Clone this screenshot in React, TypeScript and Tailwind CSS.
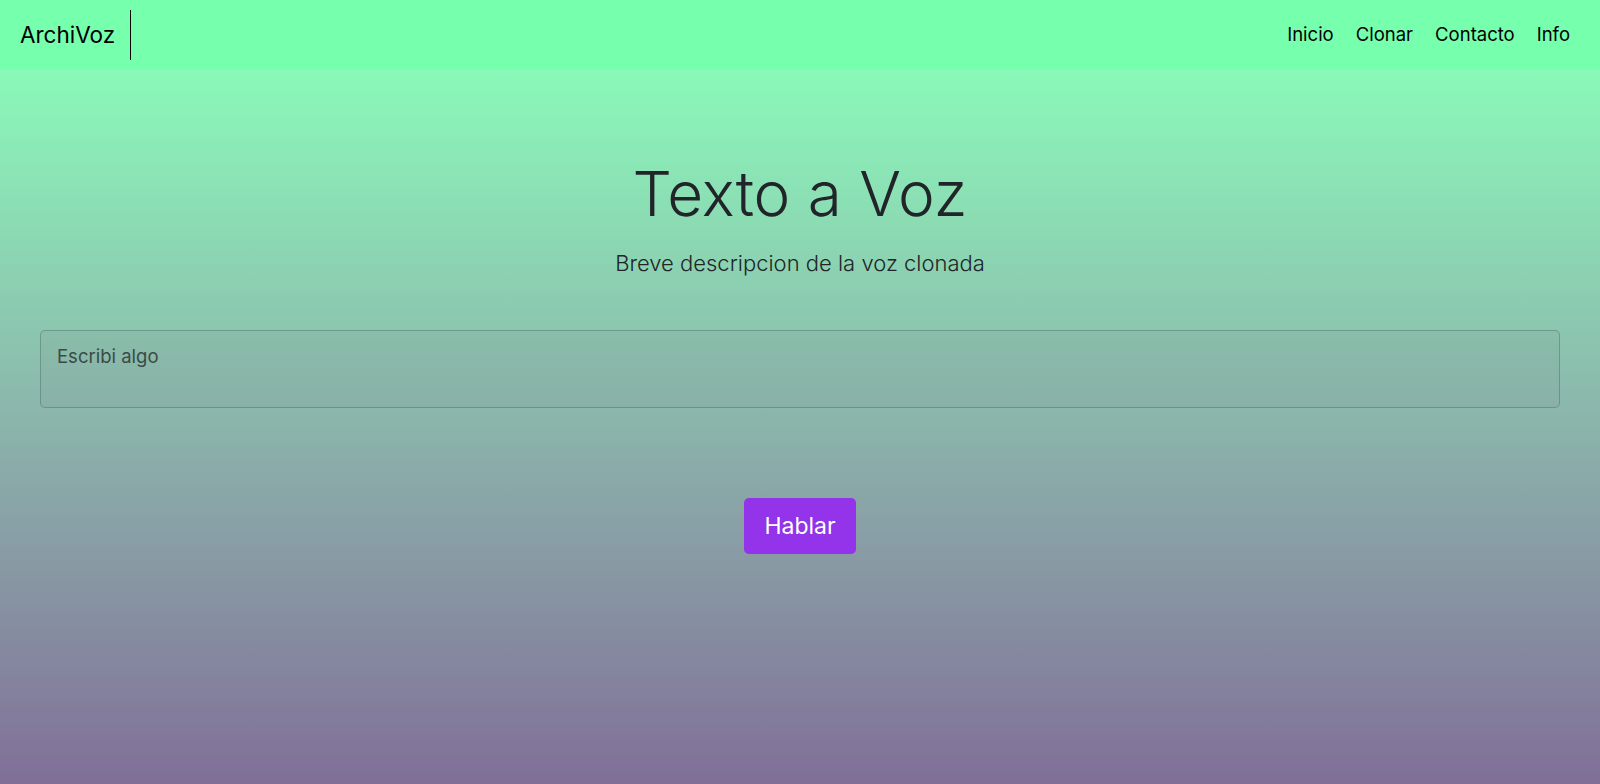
import React from 'react';

const font = { fontFamily: 'Inter, "Noto Sans", "Liberation Sans", sans-serif' };

function Navbar() {
  const links = ['Inicio', 'Clonar', 'Contacto', 'Info'];
  return (
    <nav className="flex h-[70px] items-center justify-between bg-[#76ffad] pl-5 pr-[30px]">
      <div className="flex items-center">
        <span className="text-[22.5px] text-black">ArchiVoz</span>
        <span className="ml-[15px] h-[50px] w-px bg-black" />
      </div>
      <ul className="flex items-center gap-[22px] text-[18.5px] text-black">
        {links.map((l) => (
          <li key={l}>
            <a href="#">{l}</a>
          </li>
        ))}
      </ul>
    </nav>
  );
}

export default function App() {
  return (
    <div className="flex h-[784px] flex-col overflow-hidden" style={font}>
      <Navbar />
      <main className="flex flex-1 flex-col items-center bg-gradient-to-b from-[#89f9b9] to-[#806f98]">
        <h1 className="mt-[84px] text-[62px] leading-[80px] font-light text-[#212529]">Texto a Voz</h1>
        <p className="mt-[14px] text-[22px] leading-[30px] font-light text-[#212529]">
          Breve descripcion de la voz clonada
        </p>
        <div className="mt-[52px] w-full px-10">
          <textarea
            placeholder="Escribi algo"
            className="block h-[78px] w-full resize-none rounded-[5px] border border-[rgba(60,90,80,0.35)] bg-[rgba(120,130,140,0.12)] px-[16px] py-[12px] text-[18.5px] text-[#333] outline-none placeholder:text-[#3c4a46]"
          />
        </div>
        <button className="mt-[90px] h-[56px] w-[112px] rounded-[5px] bg-[#9333ea] text-[23px] text-white">
          Hablar
        </button>
      </main>
    </div>
  );
}
